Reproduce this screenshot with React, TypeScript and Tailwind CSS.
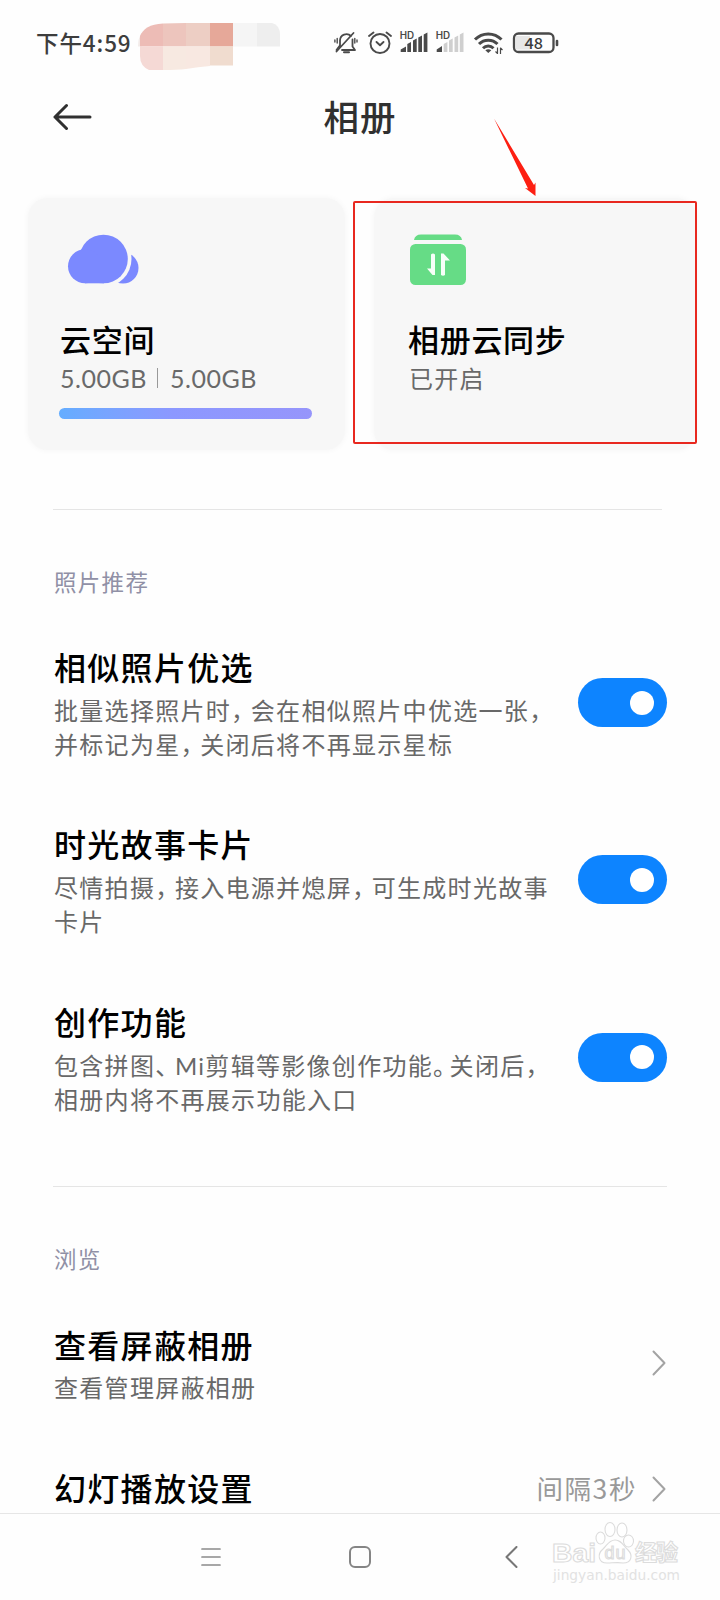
import type { ReactNode } from "react";

function Spaced({ text }: { text: string }) {
  return (
    <>
      {text.split(/([，、。])/).map((part, i) =>
        part === "。" ? (
          <span key={i} className="tracking-[-7.500px]">{part}</span>
        ) : /^[，、]$/.test(part) ? (
          <span key={i} className="tracking-[-4.300px]">{part}</span>
        ) : (
          <span key={i}>{part}</span>
        ),
      )}
    </>
  );
}

function StatusIcons() {
  return (
    <svg width="230" height="36" viewBox="330 24 230 36" className="ml-[48px]" fill="none" stroke="#4a4a4a" strokeLinecap="round" strokeLinejoin="round">
      <g strokeWidth="1.8">
        <path d="M340 47V40.500a6.500 6.500 0 0 1 11-4.500" />
        <path d="M352.500 39.500v7l2.500 3.500h-13" />
        <path d="M339.500 46l-3 4" />
        <path d="M336.500 51.500L353.500 33" />
        <path d="M344 52.200h5" strokeWidth="2" />
        <path d="M337.200 38.500v4.500M334.900 40v2M354.800 38.500v4.500M357 40v2" strokeWidth="1.400" />
      </g>
      <g strokeWidth="1.900">
        <circle cx="380" cy="43.500" r="9.500" />
        <path d="M376.500 42l3.500 3.200 3.500-3.200" />
        <path d="M369 36l4.500-3.500M391 36l-4.500-3.500" />
      </g>
      <g fill="#4a4a4a" stroke="none">
        <path d="M400.700 52v-2.500l5.300-3v5.500zM407.300 52v-8l3.700-2v10zM413 52V40.500l3.700-2v13.500zM418.300 52V37.500l3.700-2v16.500zM423.700 52V34.500l3.700-2v19.500z" />
        <path d="M436.700 52v-2.500l5.300-3.500v6z" />
        <path fill="#cfcfcf" d="M443.700 52v-8l3.700-2v10zM449 52V40.500l3.700-2v13.500zM454.500 52V37.500l3.700-2v16.500zM459.800 52V34.500l3.700-2v19.500z" />
        <text x="399.700" y="39.300" fontSize="9.800" fontWeight="600" textLength="14.500" className="font-[Inter,sans-serif]">HD</text>
        <text x="435.700" y="39.300" fontSize="9.800" fontWeight="600" textLength="14.500" className="font-[Inter,sans-serif]">HD</text>
      </g>
      <g strokeWidth="3" strokeLinecap="butt">
        <path d="M475 39.500a18.500 18.500 0 0 1 26.500 0" />
        <path d="M479 44a13 13 0 0 1 18.500 0" />
        <path d="M483 48.200a7.500 7.500 0 0 1 10.500 0" />
        <path d="M485.300 50.300l3 2.700 3-2.700q-3-2-6 0z" fill="#4a4a4a" stroke="none" />
        <path d="M497.500 47.500v6l-2-2M500.500 54v-6l2 2" strokeWidth="1.200" />
      </g>
      <rect x="514" y="33.500" width="39.500" height="18.500" rx="4.500" strokeWidth="2.300" />
      <path d="M516 36h14v13.500h-14z" fill="#ddd" stroke="none" opacity="0.7" />
      <path d="M557 41v4" strokeWidth="2.600" />
      <text x="524.500" y="48.500" fontSize="15.500" fontWeight="500" fill="#3d3d3d" stroke="none" textLength="18.500" lengthAdjust="spacingAndGlyphs" className="font-['Noto_Sans_CJK_SC',sans-serif]">48</text>
    </svg>
  );
}

function Mosaic() {
  return (
    <svg width="144" height="50" viewBox="138 20 144 50" className="ml-[7px]">
      <path fill="#f3ebe9" d="M138 46.500q0-9 4-14v14z" />
      <path fill="#edbcb6" d="M140 46.500V36c3-7 10-12 23-12.500V46.500z" />
      <path fill="#edc5bd" d="M163 23.500l23-.5v23.500h-23z" />
      <path fill="#edcec4" d="M186 23h24v23.500h-24z" />
      <path fill="#e6a899" d="M210 23h23v23.500h-23z" />
      <path fill="#f5f5f5" d="M233 23h24v23.500h-24z" />
      <path fill="#eeeeee" d="M257 23h15q8 2 8 12v11.500h-23z" />
      <path fill="#f5d9d5" d="M140 46.500h23V70h-14q-9-4-9-14z" />
      <path fill="#f7e9e1" d="M163 46.500h23V69q-9 1-23 1z" />
      <path fill="#f8e8e1" d="M186 46.500h24V66q-12 1-24 3z" />
      <path fill="#f0dccf" d="M210 46.500h23V65.500h-23z" />
    </svg>
  );
}

function Title({ children }: { children: ReactNode }) {
  return <div className="whitespace-nowrap text-[32px] leading-[44px] font-medium tracking-[1.3px] text-black">{children}</div>;
}

function CardTitle({ children }: { children: ReactNode }) {
  return <div className="whitespace-nowrap text-[31px] leading-[44px] font-medium tracking-[0.7px] text-black">{children}</div>;
}

function Chevron() {
  return (
    <svg width="14" height="26" viewBox="0 0 14 26" fill="none" stroke="#a3a3a3" strokeWidth="2" strokeLinecap="round" strokeLinejoin="round">
      <path d="M1.500 1.500L12.500 13 1.500 24.500" />
    </svg>
  );
}

function SwitchRow({ title, lines }: { title: string; lines: string[] }) {
  return (
    <div className="flex h-[177.300px] justify-between pr-[53.500px] pl-[54px]">
      <div className="-mt-px">
        <Title>{title}</Title>
        <div className="mt-[4px] text-[24px] leading-[34px] tracking-[1.3px] whitespace-nowrap text-[#686868]">
          {lines.map((l) => (
            <div key={l}><Spaced text={l} /></div>
          ))}
        </div>
      </div>
      <div className="mt-[31px] flex h-[49px] w-[89px] shrink-0 items-center justify-end rounded-full bg-[#0d84ff] pr-[12.500px]">
        <div className="size-[24px] rounded-full bg-white" />
      </div>
    </div>
  );
}

function Watermark() {
  return (
    <svg width="134" height="68" viewBox="548 1518 134 68" className="absolute top-[4px] left-[548px]" fill="#fff" stroke="#dcdcdc" strokeWidth="1.100">
      <ellipse cx="600.500" cy="1538" rx="4.500" ry="6" />
      <ellipse cx="610" cy="1529.500" rx="5" ry="7" />
      <ellipse cx="622" cy="1530" rx="5" ry="7" />
      <ellipse cx="628.500" cy="1541" rx="5" ry="6" />
      <path d="M615 1540c-6 0-8 5-12 9-6 5-5 14 4 14 5 0 11-1 16 0 9 0 10-8 5-13-5-5-7-10-13-10z" />
      <text x="552" y="1562" fontSize="26.500" fontWeight="700" textLength="44" lengthAdjust="spacingAndGlyphs" className="font-['Liberation_Sans',sans-serif]">Bai</text>
      <text x="604.500" y="1559" fontSize="18" fontWeight="400" textLength="21" className="font-['Liberation_Sans',sans-serif]">du</text>
      <text x="635" y="1560" fontSize="22" fontWeight="700" textLength="43">经验</text>
      <text x="553" y="1580" fontSize="13.500" fill="#e2e2e2" stroke="none" textLength="127" lengthAdjust="spacingAndGlyphs" className="font-['DejaVu_Sans',sans-serif]">jingyan.baidu.com</text>
    </svg>
  );
}

export default function App() {
  return (
    <div className="relative flex h-[1600px] w-[720px] flex-col overflow-hidden bg-[#fefefe] font-[Lato,'Noto_Sans_CJK_SC',sans-serif]">
      <header className="flex h-[86px] shrink-0 items-start">
        <div className="mt-[26px] ml-[36px] w-[95px] text-[22.500px] leading-[32px] font-medium tracking-[0.900px] whitespace-nowrap text-[#3d3d3d] font-['Noto_Sans_CJK_SC',sans-serif]">下午4:59</div>
        <div className="mt-[20px]"><Mosaic /></div>
        <div className="mt-[24px]"><StatusIcons /></div>
      </header>

      <div className="grid h-[62px] shrink-0 grid-cols-[120px_1fr_120px] items-center">
        <svg width="40" height="28" viewBox="0 0 40 28" className="ml-[53px]" fill="none" stroke="#303030" strokeWidth="3" strokeLinecap="round" strokeLinejoin="round">
          <path d="M37 14H2M13.500 2.500L2 14l11.500 11.500" />
        </svg>
        <h1 className="pt-[2px] text-center text-[35.500px] leading-[50px] font-medium tracking-[1px] text-[#303030]">相册</h1>
      </div>

      <section className="mt-[50px] flex h-[252px] shrink-0 gap-[29px] pl-[28px]">
        <div className="flex w-[317px] flex-col rounded-[20px] bg-[#f7f7f7] pl-[32px] shadow-[0_0_6px_#f5f5f5]">
          <svg width="73" height="50" viewBox="0 0 73 50" className="mt-[36px] ml-[7px]">
            <circle cx="56" cy="34" r="15.500" fill="#7b89ff" />
            <circle cx="36.500" cy="25" r="28" fill="#f7f7f7" />
            <circle cx="36.500" cy="25" r="24.300" fill="#7b89ff" />
            <circle cx="18" cy="32.300" r="17" fill="#7b89ff" />
            <path fill="#7b89ff" d="M18 25h19v24.300H18z" />
          </svg>
          <div className="mt-[34px]"><CardTitle>云空间</CardTitle></div>
          <div className="-mt-px flex h-[34px] items-center text-[25px] leading-[34px] tracking-[0.500px] text-[#696969]">
            <span className="w-[86px] whitespace-nowrap">5.00GB</span>
            <span className="ml-[11px] h-[20px] w-px bg-[#999]" />
            <span className="ml-[12px] whitespace-nowrap">5.00GB</span>
          </div>
          <div className="mt-[13px] -ml-px h-[11px] w-[253px] rounded-full bg-linear-to-r from-[#64adff] via-[#8c98ff] via-45% to-[#9695fb]" />
        </div>
        <div className="flex w-[322px] flex-col rounded-[20px] bg-[#f7f7f7] pl-[34px] shadow-[0_0_6px_#f5f5f5]">
          <svg width="56" height="51" viewBox="0 0 56 51" className="mt-[36px] ml-[2px]">
            <path fill="#66dc86" d="M4 6q1-5.500 7-5.500h34q6 0 7 5.500z" />
            <rect y="10" width="56" height="41" rx="5.500" fill="#66dc86" />
            <path fill="#f7fff8" d="M21 20.500q2-2 4 0V41h-2.500L17 34.500h4zM31 41V19.500h2.500l6.500 7h-5V41q-2 1.500-4 0z" />
          </svg>
          <div className="mt-[33px]"><CardTitle>相册云同步</CardTitle></div>
          <div className="pl-px text-[24px] leading-[34px] tracking-[1.300px] text-[#696969]">已开启</div>
        </div>
      </section>

      <div className="mt-[59px] ml-[53px] h-px w-[609px] shrink-0 bg-[#e5e5e5]" />
      <div className="mt-[56px] mb-[47px] h-[34px] shrink-0 pl-[54px] text-[22.500px] leading-[34px] tracking-[1.300px] text-[#9090a6]">照片推荐</div>

      <SwitchRow title="相似照片优选" lines={["批量选择照片时，会在相似照片中优选一张，", "并标记为星，关闭后将不再显示星标"]} />
      <SwitchRow title="时光故事卡片" lines={["尽情拍摄，接入电源并熄屏，可生成时光故事", "卡片"]} />
      <SwitchRow title="创作功能" lines={["包含拼图、Mi剪辑等影像创作功能。关闭后，", "相册内将不再展示功能入口"]} />

      <div className="mt-[7px] ml-[53px] h-px w-[614px] shrink-0 bg-[#e5e5e5]" />
      <div className="mt-[56px] mb-[47px] h-[34px] shrink-0 pl-[54px] text-[22.500px] leading-[34px] tracking-[1.300px] text-[#9090a6]">浏览</div>

      <div className="flex h-[143px] shrink-0 justify-between pr-[54px] pl-[54px]">
        <div>
          <Title>查看屏蔽相册</Title>
          <div className="mt-[3px] text-[24px] leading-[34px] tracking-[1.300px] text-[#686868]">查看管理屏蔽相册</div>
        </div>
        <div className="mt-[26px]"><Chevron /></div>
      </div>
      <div className="flex h-[44px] shrink-0 items-center justify-between pr-[54px] pl-[54px]">
        <Title>幻灯播放设置</Title>
        <div className="flex items-center gap-[15px] text-[26.500px] tracking-[1.600px] text-[#999] font-['Noto_Sans_CJK_SC',sans-serif]">
          <span className="-mt-[2px]">间隔3秒</span>
          <Chevron />
        </div>
      </div>

      <nav className="absolute top-[1513px] left-0 h-[87px] w-full border-t border-[#e6e6e6] bg-[#fefefe]">
        <div className="flex h-[86px] items-center">
          <svg width="20" height="20" viewBox="0 0 20 20" className="ml-[201px]" stroke="#8b8b8b" strokeWidth="1.700" strokeLinecap="round">
            <path d="M1 2h18M1 10h18M1 18h18" />
          </svg>
          <svg width="22" height="22" viewBox="0 0 22 22" className="ml-[128px]" fill="none" stroke="#858585" strokeWidth="2">
            <rect x="1" y="1" width="20" height="20" rx="5" />
          </svg>
          <svg width="13" height="22" viewBox="0 0 13 22" className="ml-[134px]" fill="none" stroke="#777" strokeWidth="2" strokeLinecap="round" strokeLinejoin="round">
            <path d="M11.500 1L1.500 11l10 10" />
          </svg>
        </div>
        <Watermark />
      </nav>

      <div className="pointer-events-none absolute top-[201px] left-[353px] h-[243px] w-[344px] rounded-[2px] border-2 border-[#e8281f]" />
      <svg width="46" height="80" viewBox="492 117 46 80" className="pointer-events-none absolute top-[117px] left-[492px]">
        <path fill="#fd1f12" d="M494 118.500l40 66.500 1.500-2.500v13.500l-10.500-8 3 .5z" />
      </svg>
    </div>
  );
}
